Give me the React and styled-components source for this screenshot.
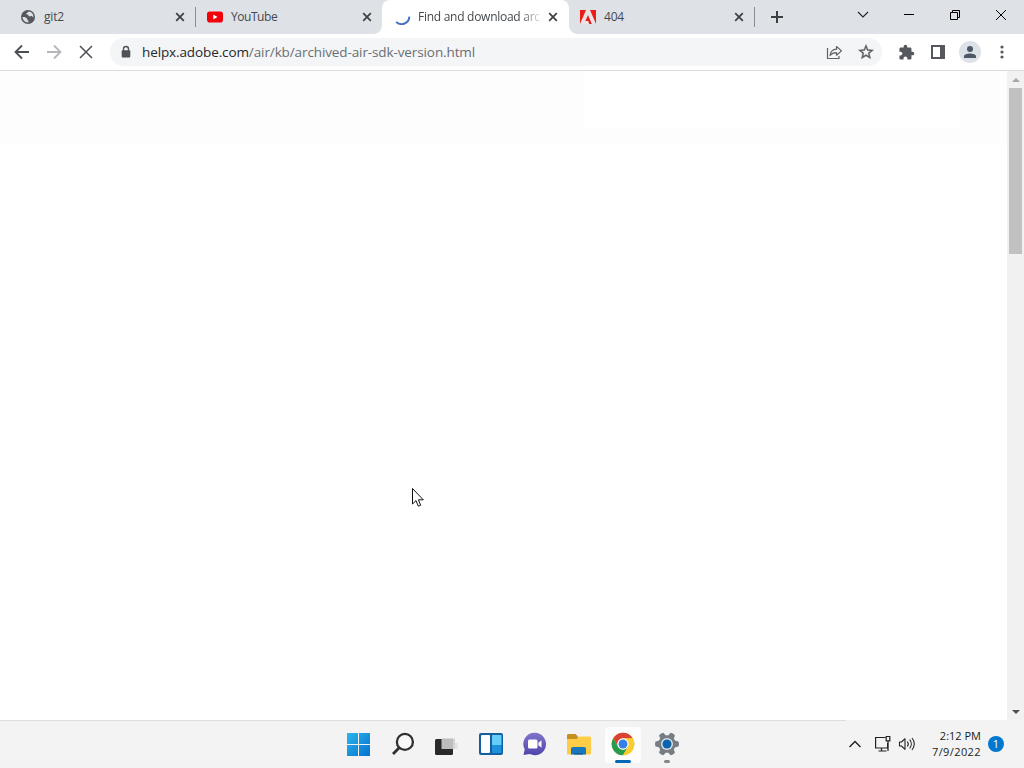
import React from 'react';
import styled, { createGlobalStyle } from 'styled-components';

const GlobalStyle = createGlobalStyle`
  * {
    box-sizing: border-box;
  }

  body {
    margin: 0;
    overflow: hidden;
    font-family: "Open Sans", "Noto Sans", sans-serif;
    cursor: default;
  }

  svg {
    display: block;
    flex: none;
  }
`;

const Desktop = styled.div`
  position: relative;
  display: flex;
  flex-direction: column;
  width: 1024px;
  height: 768px;
  background: #ffffff;
`;

const TabStrip = styled.div`
  display: flex;
  height: 34px;
  background: #dee1e6;
`;

const Tab = styled.div`
  display: flex;
  align-items: center;
  width: ${props => props.$width}px;
  height: 34px;
  padding-left: ${props => props.$pad}px;
  padding-right: ${props => props.$end || 7}px;
  color: #45494d;
  background: ${props => (props.$active ? '#ffffff' : 'transparent')};
  border-radius: ${props => (props.$active ? '8px 8px 0 0' : '0')};
`;

/* the little outward curves at the foot of the active tab */
const TabFoot = styled.div`
  align-self: flex-end;
  width: 8px;
  height: 8px;
  margin-left: ${props => (props.$right ? '0' : '-8px')};
  margin-right: ${props => (props.$right ? '-8px' : '0')};
  background: radial-gradient(circle at ${props => (props.$right ? '100% 0' : '0 0')}, transparent 7.5px, #ffffff 8px);
`;

const TabTitle = styled.span`
  margin-left: ${props => (props.$fade ? 7 : 8)}px;
  margin-right: auto;
  font-size: 12px;
  line-height: 18px;
  letter-spacing: ${props => props.$spacing || -0.2}px;
  white-space: nowrap;
  mask-image: ${props => (props.$fade ? 'linear-gradient(to right, #000 84%, rgba(0, 0, 0, 0.15))' : 'none')};
`;

const Separator = styled.div`
  align-self: center;
  width: 1px;
  height: 20px;
  background: #8a8d92;
`;

const NewTab = styled.div`
  display: flex;
  align-items: center;
  justify-content: center;
  width: 44px;
`;

const WindowControls = styled.div`
  display: flex;
  margin-left: auto;
`;

const WindowButton = styled.div`
  display: flex;
  align-items: center;
  justify-content: center;
  width: 46px;
  height: 29px;
`;

const Toolbar = styled.div`
  display: flex;
  align-items: center;
  height: 37px;
  padding: 0 6px;
  border-bottom: 1px solid #dadce0;
`;

const ToolButton = styled.div`
  display: flex;
  align-items: center;
  justify-content: center;
  width: 32px;
  height: 28px;
`;

const AddressBar = styled.div`
  display: flex;
  align-items: center;
  width: 772px;
  height: 28px;
  margin: 0 8px;
  border-radius: 14px;
  background: #f3f5f6;
`;

const Url = styled.div`
  flex: 1;
  color: #6a6e73;
  font-size: 13.5px;
  line-height: 20px;
  letter-spacing: -0.11px;
  white-space: nowrap;
`;

const Host = styled.span`
  color: #26282b;
`;

const Avatar = styled.div`
  display: flex;
  align-items: center;
  justify-content: center;
  width: 22px;
  height: 22px;
  border-radius: 50%;
  background: #dde2e8;
`;

const Viewport = styled.div`
  display: flex;
  height: 649px;
`;

const Page = styled.div`
  width: 1007px;
  background: #ffffff;
`;

const PageHeader = styled.div`
  display: flex;
  height: 72px;
  padding-left: 584px;
  background: #fdfdfd;
`;

const HeaderPanel = styled.div`
  width: 376px;
  height: 57px;
  background: #ffffff;
`;

const ScrollBar = styled.div`
  display: flex;
  flex-direction: column;
  align-items: center;
  width: 17px;
  background: #f1f1f1;
`;

const ScrollArrow = styled.div`
  display: flex;
  align-items: center;
  justify-content: center;
  width: 17px;
  height: 17px;
`;

const ScrollThumb = styled.div`
  width: 13px;
  height: 166px;
  margin-bottom: auto;
  background: #c1c1c1;
`;

const TaskBar = styled.div`
  display: flex;
  height: 48px;
  padding-left: 337px;
  background: linear-gradient(to right, #dedede 846px, #f3f3f3 846px) 0 0 / 100% 1px no-repeat #f3f3f3;
`;

const TaskItem = styled.div`
  display: flex;
  flex-direction: column;
  align-items: center;
  width: 36px;
  height: 36px;
  margin: 7px 4px 0;
  padding-top: 5px;
  border-radius: 4px;
  background: ${props => (props.$active ? '#fdfdfd' : 'transparent')};
`;

const Running = styled.div`
  width: ${props => (props.$active ? 16 : 6)}px;
  height: 3px;
  margin-top: 4px;
  border-radius: 2px;
  background: ${props => (props.$active ? '#0067b5' : '#858585')};
`;

const Tray = styled.div`
  display: flex;
  align-items: center;
  margin-left: auto;
  padding-right: 20px;
`;

const TrayIcon = styled.div`
  margin-right: ${props => props.$gap}px;
`;

const Clock = styled.div`
  width: 56px;
  color: #1c1c1c;
  font-size: 11px;
  line-height: 16px;
  text-align: right;
  white-space: nowrap;
`;

const ClockDate = styled.div`
  letter-spacing: 0.4px;
`;

const Badge = styled.div`
  width: 16px;
  height: 16px;
  margin-left: 7px;
  border-radius: 50%;
  color: #ffffff;
  background: #0078d0;
  font-size: 11px;
  line-height: 16px;
  text-align: center;
`;

const Pointer = styled.svg`
  position: absolute;
  left: 411px;
  top: 487px;
`;

const Close = () => (
  <svg width="16" height="16" viewBox="0 0 16 16">
    <path d="M4.2 4.2l7.6 7.6M11.8 4.2l-7.6 7.6" stroke="#3c4043" strokeWidth="1.7" />
  </svg>
);

const Globe = () => (
  <svg width="16" height="16" viewBox="0 0 16 16">
    <circle cx="8" cy="8" r="7" fill="#55595e" />
    <path d="M2.5 8.1c1.8-.1 3.3.4 4.4 1.4.9.8.1 1.7 1.2 1.9.6.2.6 1 .1 2-3.1.1-5.6-2.2-5.7-5.3z" fill="#dee1e6" />
    <path d="M8.5 2.5c-.2 1.1-1.4 1-2 1.7-.6.8.2 1.3 1.1 1.4.9.1.6 1.3 1.5 1.7 1 .5 1.8-.6 2.7-.2.7.3.8 1.2 1.6 1.1.2-3.2-1.7-5.4-4.9-5.7z" fill="#dee1e6" />
  </svg>
);

const YouTube = () => (
  <svg width="16" height="16" viewBox="0 0 16 16">
    <rect y="2.5" width="16" height="11" rx="2.8" fill="#f30008" />
    <path d="M6.3 5.6v4.8l4.2-2.4z" fill="#fff" />
  </svg>
);

const Spinner = () => (
  <svg width="16" height="16" viewBox="0 0 16 16">
    <path d="M1.2 12.8c3.9 4.1 12.5 2.8 13.2-5.1" fill="none" stroke="#4470c4" strokeWidth="1.9" />
  </svg>
);

const Adobe = () => (
  <svg width="16" height="16" viewBox="0 0 16 16">
    <path d="M0 1h16v14H0z" fill="#ed1c16" />
    <path d="M6 1h4l6 14h-4.2L8 6.1 5.4 12.1h2.8L9.3 15H0z" fill="#e9e4e7" />
  </svg>
);

const Arrow = ({ color, flip }) => (
  <svg width="20" height="20" viewBox="0 0 20 20">
    <path
      d={flip ? 'M3 10h13M10 3.5l6.5 6.5-6.5 6.5' : 'M17 10H4M10 3.5L3.5 10l6.5 6.5'}
      fill="none"
      stroke={color}
      strokeWidth="1.8"
    />
  </svg>
);

const Lock = () => (
  <svg width="12" height="14" viewBox="0 0 12 14">
    <path d="M3.5 6V4a2.5 2.5 0 0 1 5 0v2" fill="none" stroke="#4f5358" strokeWidth="1.4" />
    <rect x="1.7" y="5.2" width="8.6" height="7.3" rx="1" fill="#4f5358" />
  </svg>
);

const Share = () => (
  <svg width="18" height="18" viewBox="0 0 18 18" fill="none" stroke="#5f6368" strokeWidth="1.2">
    <path d="M2.5 5v10.5H14V13" />
    <path d="M5 12.5C5.5 8.600 7.800 6.400 11.500 6.200V3.500l5 4.400-5 4.300V9.600c-3-.1-4.900.9-6.500 2.900z" strokeLinejoin="round" />
  </svg>
);

const Star = () => (
  <svg width="18" height="18" viewBox="0 0 24 24" fill="#5a5e63" stroke="#5a5e63" strokeWidth=".5">
    <path d="M22 9.24l-7.19-.62L12 2 9.19 8.63 2 9.24l5.46 4.73L5.82 21 12 17.27 18.18 21l-1.63-7.03L22 9.24zM12 15.4l-3.76 2.27 1-4.28-3.32-2.88 4.38-.38L12 6.1l1.71 4.04 4.38.38-3.32 2.88 1 4.28L12 15.4z" />
  </svg>
);

const Puzzle = () => (
  <svg width="17" height="17" viewBox="0 0 24 24" fill="#55595e">
    <path d="M20.5 11H19V7c0-1.1-.9-2-2-2h-4V3.5C13 2.12 11.88 1 10.5 1S8 2.12 8 3.5V5H4c-1.1 0-1.99.9-1.99 2v3.8H3.5c1.49 0 2.7 1.21 2.7 2.7s-1.21 2.7-2.7 2.7H2V20c0 1.1.9 2 2 2h3.8v-1.5c0-1.49 1.21-2.7 2.7-2.7 1.49 0 2.7 1.21 2.7 2.7V22H17c1.1 0 2-.9 2-2v-4h1.5c1.38 0 2.5-1.12 2.5-2.5S21.88 11 20.5 11z" />
  </svg>
);

const SidePanel = () => (
  <svg width="14" height="14" viewBox="0 0 14 14">
    <path d="M0 0h14v14H0zM2 2v10h7V2z" fill="#55595e" fillRule="evenodd" />
  </svg>
);

const Person = () => (
  <svg width="14" height="14" viewBox="0 0 14 14" fill="#4c5767">
    <circle cx="7" cy="4.1" r="3" />
    <path d="M1 13v-1.7C1 9.3 4.4 8.4 7 8.4s6 .9 6 2.9V13z" />
  </svg>
);

const Dots = () => (
  <svg width="4" height="14" viewBox="0 0 4 14" fill="#55595e">
    <circle cx="2" cy="2" r="1.6" />
    <circle cx="2" cy="7" r="1.6" />
    <circle cx="2" cy="12" r="1.6" />
  </svg>
);

const StartIcon = () => (
  <svg width="24" height="24" viewBox="0 0 24 24">
    <defs>
      <linearGradient id="start" x1="0" y1="0" x2="1" y2="1">
        <stop offset="0" stopColor="#2cb5ec" />
        <stop offset="1" stopColor="#0672ce" />
      </linearGradient>
    </defs>
    <path d="M0 1h11v11H0zM12 1h11v11H12zM0 13h11v11H0zM12 13h11v11H12z" fill="url(#start)" />
  </svg>
);

const SearchIcon = () => (
  <svg width="24" height="24" viewBox="0 0 24 24" fill="none">
    <circle cx="13.9" cy="9.9" r="8" fill="#f9f9f9" stroke="#303030" strokeWidth="2.3" />
    <path d="M8.2 15.8L2 22" stroke="#303030" strokeWidth="2.8" />
  </svg>
);

const TaskViewIcon = () => (
  <svg width="24" height="24" viewBox="0 0 24 24">
    <rect y="7" width="18" height="16" rx="1.5" fill="#292929" />
    <path d="M6.5 6.5H18V17H6.5z" fill="#bdbdbd" />
    <path d="M18 6.5h2V17h-2z" fill="#d4d4d4" />
    <path d="M20 11h3v6h-3z" fill="#e4e4e4" />
  </svg>
);

const WidgetsIcon = () => (
  <svg width="26" height="24" viewBox="0 0 26 24">
    <rect x="1" y="1" width="24" height="22" rx="2" fill="#135f9f" />
    <rect x="3" y="3" width="9" height="18" rx="1" fill="#fafcff" />
    <rect x="14" y="3" width="9.5" height="10" rx=".5" fill="#65cdf8" />
    <rect x="14" y="13" width="9.5" height="8" rx=".5" fill="#1d91dc" />
  </svg>
);

const ChatIcon = () => (
  <svg width="24" height="24" viewBox="0 0 24 24">
    <defs>
      <linearGradient id="chat" x1="0" y1="0" x2="0" y2="1">
        <stop offset="0" stopColor="#8075ca" />
        <stop offset="1" stopColor="#5145ad" />
      </linearGradient>
    </defs>
    <path d="M12 .8a11.2 11.2 0 1 1-5.2 21.2L.5 23l1.2-5.7A11.2 11.2 0 0 1 12 .8z" fill="url(#chat)" />
    <rect x="5" y="7.5" width="9.5" height="9" rx="1.5" fill="#fff" />
    <path d="M15.5 10.8l3-2.5v7.4l-3-2.5z" fill="#fff" />
  </svg>
);

const FolderIcon = () => (
  <svg width="26" height="24" viewBox="0 0 26 24">
    <path d="M1 3.5c0-1 .7-1.5 1.5-1.5h7L12 4.5V9H1z" fill="#c6901e" />
    <path d="M1 7h9.5L13 4.5h10.5c1 0 1.5.6 1.5 1.5v15.5c0 .6-.5 1-1 1H2c-.6 0-1-.4-1-1z" fill="#fdcd48" />
    <path d="M5 22.5V17c0-1.3.7-2 2-2h11c1.3 0 2 .7 2 2v5.5z" fill="#1978bd" />
    <path d="M8 21h9v1.5H8z" fill="#12609a" />
  </svg>
);

const ChromeIcon = () => (
  <svg width="24" height="24" viewBox="0 0 24 24">
    <circle cx="12" cy="12" r="11.3" fill="#f5c82d" />
    <path d="M2.21 6.35A11.3 11.3 0 0 1 21.79 6.35H12A5.65 5.65 0 0 0 7.1 14.82z" fill="#d94235" />
    <path d="M2.21 6.35l4.9 8.48A5.65 5.65 0 0 0 16.9 14.82L12 23.3A11.3 11.3 0 0 1 2.21 6.35z" fill="#279b50" />
    <path d="M12 6.35h9.79A11.3 11.3 0 0 1 12 23.3l4.9-8.48A5.65 5.65 0 0 0 12 6.35z" fill="#f9cc31" />
    <circle cx="12" cy="12" r="5.7" fill="#fff" />
    <circle cx="12" cy="12" r="4.5" fill="#347fe9" />
  </svg>
);

const SettingsIcon = () => (
  <svg width="26" height="24" viewBox="0 0 26 24">
    <g fill="#777d82">
      <circle cx="13" cy="12" r="8.8" />
      {[30, 90, 150, 210, 270, 330].map(angle => (
        <path key={angle} d="M9.5 5l1-4.500q2.500-1 5 0l1 4.500z" transform={`rotate(${angle} 13 12)`} />
      ))}
    </g>
    <circle cx="13" cy="12" r="6" fill="#d4e0e9" />
    <circle cx="13" cy="12" r="4.5" fill="#0c62ab" />
  </svg>
);

const NetworkIcon = () => (
  <svg width="18" height="18" viewBox="0 0 18 18" fill="none" stroke="#222" strokeWidth="1.2">
    <path d="M11.5 2.5H1.6v10.5h12V8M7.5 13v3M4.5 16h8" />
    <path d="M12.2 1.5h3.6v4.3h-3.6zM14 6v10" />
  </svg>
);

const VolumeIcon = () => (
  <svg width="18" height="16" viewBox="0 0 18 16" fill="none" stroke="#222" strokeWidth="1.1">
    <path d="M1.5 6v4h2l3.5 3.3V2.7L3.5 6zM9.3 5.5c1.2 1.5 1.2 3.5 0 5M11.7 3.7c2.1 2.5 2.1 6.1 0 8.6M14 2c3 3.5 3 8.5 0 12" strokeLinejoin="round" />
  </svg>
);

const TrayChevron = () => (
  <svg width="14" height="10" viewBox="0 0 14 10">
    <path d="M1.5 8L7 2.5 12.5 8" fill="none" stroke="#202020" strokeWidth="1.4" />
  </svg>
);

const tasks = [
  { icon: StartIcon },
  { icon: SearchIcon },
  { icon: TaskViewIcon },
  { icon: WidgetsIcon },
  { icon: ChatIcon },
  { icon: FolderIcon },
  { icon: ChromeIcon, running: true, active: true },
  { icon: SettingsIcon, running: true },
];

function Tabs() {
  return (
    <TabStrip>
      <Tab $width={195} $pad={20}>
        <Globe />
        <TabTitle>git2</TabTitle>
        <Close />
      </Tab>
      <Separator />
      <Tab $width={186} $pad={11}>
        <YouTube />
        <TabTitle $spacing={-0.45}>YouTube</TabTitle>
        <Close />
      </Tab>
      <TabFoot />
      <Tab $width={187} $pad={13} $end={8} $active>
        <Spinner />
        <TabTitle $fade $spacing={-0.27}>Find and download arc</TabTitle>
        <Close />
      </Tab>
      <TabFoot $right />
      <Tab $width={185} $pad={11}>
        <Adobe />
        <TabTitle>404</TabTitle>
        <Close />
      </Tab>
      <Separator />
      <NewTab>
        <svg width="14" height="14" viewBox="0 0 14 14">
          <path d="M7 1v12M1 7h12" stroke="#3c4043" strokeWidth="2" />
        </svg>
      </NewTab>
      <WindowControls>
        <WindowButton>
          <svg width="12" height="12" viewBox="0 0 12 12">
            <path d="M1 3l5 5 5-5" fill="none" stroke="#222" strokeWidth="1.1" />
          </svg>
        </WindowButton>
        <WindowButton>
          <svg width="10" height="10" viewBox="0 0 10 10">
            <path d="M0 4.5h10" stroke="#000" />
          </svg>
        </WindowButton>
        <WindowButton>
          <svg width="10" height="10" viewBox="0 0 10 10">
            <path d="M.5 2.5h7v7h-7zM2.5 2.5v-2h7v7h-2" fill="none" stroke="#000" />
          </svg>
        </WindowButton>
        <WindowButton>
          <svg width="10" height="10" viewBox="0 0 10 10">
            <path d="M0 0l10 10M10 0L0 10" stroke="#000" />
          </svg>
        </WindowButton>
      </WindowControls>
    </TabStrip>
  );
}

function Navigation() {
  return (
    <Toolbar>
      <ToolButton><Arrow color="#4b4f53" /></ToolButton>
      <ToolButton><Arrow color="#b5b7ba" flip /></ToolButton>
      <ToolButton>
        <svg width="14" height="14" viewBox="0 0 14 14">
          <path d="M1 1l12 12M13 1L1 13" stroke="#4b4f53" strokeWidth="1.5" />
        </svg>
      </ToolButton>
      <AddressBar>
        <ToolButton><Lock /></ToolButton>
        <Url><Host>helpx.adobe.com</Host>/air/kb/archived-air-sdk-version.html</Url>
        <ToolButton><Share /></ToolButton>
        <ToolButton><Star /></ToolButton>
      </AddressBar>
      <ToolButton><Puzzle /></ToolButton>
      <ToolButton><SidePanel /></ToolButton>
      <ToolButton><Avatar><Person /></Avatar></ToolButton>
      <ToolButton><Dots /></ToolButton>
    </Toolbar>
  );
}

export default function App() {
  return (
    <Desktop>
      <GlobalStyle />
      <Tabs />
      <Navigation />
      <Viewport>
        <Page>
          <PageHeader>
            <HeaderPanel />
          </PageHeader>
        </Page>
        <ScrollBar>
          <ScrollArrow>
            <svg width="8" height="4" viewBox="0 0 8 4"><path d="M0 4l4-4 4 4z" fill="#a3a3a3" /></svg>
          </ScrollArrow>
          <ScrollThumb />
          <ScrollArrow>
            <svg width="8" height="4" viewBox="0 0 8 4"><path d="M0 0l4 4 4-4z" fill="#505050" /></svg>
          </ScrollArrow>
        </ScrollBar>
      </Viewport>
      <TaskBar>
        {tasks.map(({ icon: Icon, running, active }, index) => (
          <TaskItem key={index} $active={active}>
            <Icon />
            {running && <Running $active={active} />}
          </TaskItem>
        ))}
        <Tray>
          <TrayIcon $gap={12}><TrayChevron /></TrayIcon>
          <TrayIcon $gap={6}><NetworkIcon /></TrayIcon>
          <TrayIcon $gap={9}><VolumeIcon /></TrayIcon>
          <Clock>
            <div>2:12 PM</div>
            <ClockDate>7/9/2022</ClockDate>
          </Clock>
          <Badge>1</Badge>
        </Tray>
      </TaskBar>
      <Pointer width="14" height="22" viewBox="0 0 14 22">
        <path d="M1.5 1.5V17L5 13.6l2.3 5.6 2.4-1-2.3-5.4h4.9z" fill="#fff" stroke="#111" />
      </Pointer>
    </Desktop>
  );
}
